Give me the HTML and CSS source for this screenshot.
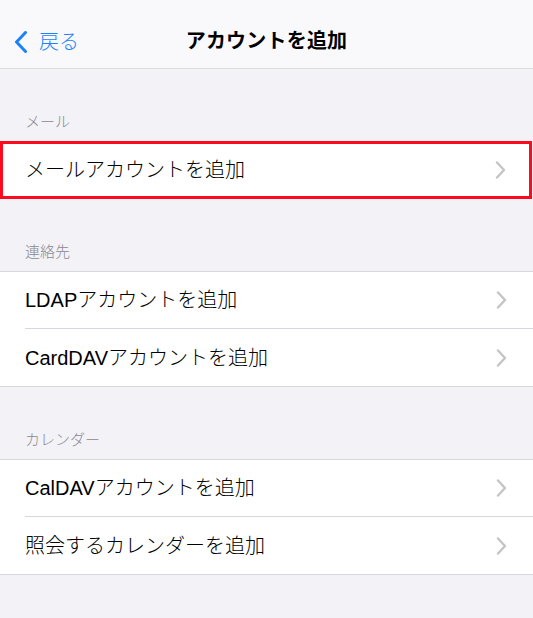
FILE: index.html
```html
<!DOCTYPE html>
<html lang="ja">
<head>
<meta charset="utf-8">
<title>アカウントを追加</title>
<link rel="stylesheet" href="styles.css">
</head>
<body>
<header class="navbar">
  <a class="back">
    <svg class="back-icon" width="14" height="22" viewBox="0 0 14 22"><polyline points="11.5,1.5 2.5,11 11.5,20.5" fill="none" stroke="#1a82fb" stroke-width="3" stroke-linecap="round" stroke-linejoin="round"/></svg>
    <span class="back-label">戻る</span>
  </a>
  <h1 class="title">アカウントを追加</h1>
</header>

<main class="content">
  <section class="section">
    <div class="section-header">メール</div>
    <div class="group group-highlight">
      <div class="row"><span class="row-label">メールアカウントを追加</span><svg class="chevron" width="11" height="18" viewBox="0 0 11 18"><polyline points="2,1.5 9,9 2,16.5" fill="none" stroke="#c4c4c7" stroke-width="2.4" stroke-linecap="round" stroke-linejoin="round"/></svg></div>
    </div>
  </section>

  <section class="section">
    <div class="section-header">連絡先</div>
    <div class="group">
      <div class="row"><span class="row-label">LDAPアカウントを追加</span><svg class="chevron" width="11" height="18" viewBox="0 0 11 18"><polyline points="2,1.5 9,9 2,16.5" fill="none" stroke="#c4c4c7" stroke-width="2.4" stroke-linecap="round" stroke-linejoin="round"/></svg></div>
      <div class="row"><span class="row-label">CardDAVアカウントを追加</span><svg class="chevron" width="11" height="18" viewBox="0 0 11 18"><polyline points="2,1.5 9,9 2,16.5" fill="none" stroke="#c4c4c7" stroke-width="2.4" stroke-linecap="round" stroke-linejoin="round"/></svg></div>
    </div>
  </section>

  <section class="section">
    <div class="section-header">カレンダー</div>
    <div class="group">
      <div class="row"><span class="row-label">CalDAVアカウントを追加</span><svg class="chevron" width="11" height="18" viewBox="0 0 11 18"><polyline points="2,1.5 9,9 2,16.5" fill="none" stroke="#c4c4c7" stroke-width="2.4" stroke-linecap="round" stroke-linejoin="round"/></svg></div>
      <div class="row"><span class="row-label">照会するカレンダーを追加</span><svg class="chevron" width="11" height="18" viewBox="0 0 11 18"><polyline points="2,1.5 9,9 2,16.5" fill="none" stroke="#c4c4c7" stroke-width="2.4" stroke-linecap="round" stroke-linejoin="round"/></svg></div>
    </div>
  </section>
</main>
</body>
</html>
```

FILE: styles.css
```css
* { box-sizing: border-box; }

html, body {
  margin: 0;
  padding: 0;
  background: #f2f2f7;
  font-family: "Liberation Sans", "Noto Sans CJK JP", sans-serif;
  font-weight: 300;
  color: #000;
  width: 533px;
  height: 618px;
  overflow: hidden;
}

.navbar {
  position: relative;
  height: 69px;
  background: #f9f9fb;
  border-bottom: 1px solid #dcdce0;
  display: flex;
  justify-content: center;
  padding-top: 29px;
}

.back {
  position: absolute;
  left: 14px;
  top: 31px;
  display: flex;
  align-items: center;
  gap: 11px;
  color: #1a82fb;
}

.back-icon { display: block; }

.back-label {
  font-size: 20px;
  line-height: 22px;
}

.title {
  margin: 0;
  font-size: 20px;
  font-weight: bold;
  line-height: 24px;
  letter-spacing: 0.2px;
}

.section {
  display: flex;
  flex-direction: column;
}

.section-header {
  height: 72px;
  padding: 0 25px 10px;
  display: flex;
  align-items: flex-end;
  font-size: 15px;
  line-height: 18px;
  color: #8a8a8e;
}

.group {
  background: #fff;
  border-top: 1px solid #d8d8dc;
  border-bottom: 1px solid #d8d8dc;
}

.group-highlight {
  border: 3px solid #fe0a1e;
  margin-right: 1px;
}

.row {
  height: 56px;
  padding: 0 26px 0 25px;
  display: flex;
  align-items: center;
  justify-content: space-between;
  background-image: linear-gradient(#d8d8dc, #d8d8dc);
  background-repeat: no-repeat;
  background-size: 0 0;
}

.row + .row {
  height: 58px;
  padding-top: 1px;
  background-position: 25px 0;
  background-size: 100% 1px;
}

.group-highlight .row {
  height: 52px;
  padding-left: 22px;
  padding-right: 23px;
}

.row-label {
  font-size: 20px;
  line-height: 24px;
}

.chevron {
  display: block;
  flex: none;
}
```
